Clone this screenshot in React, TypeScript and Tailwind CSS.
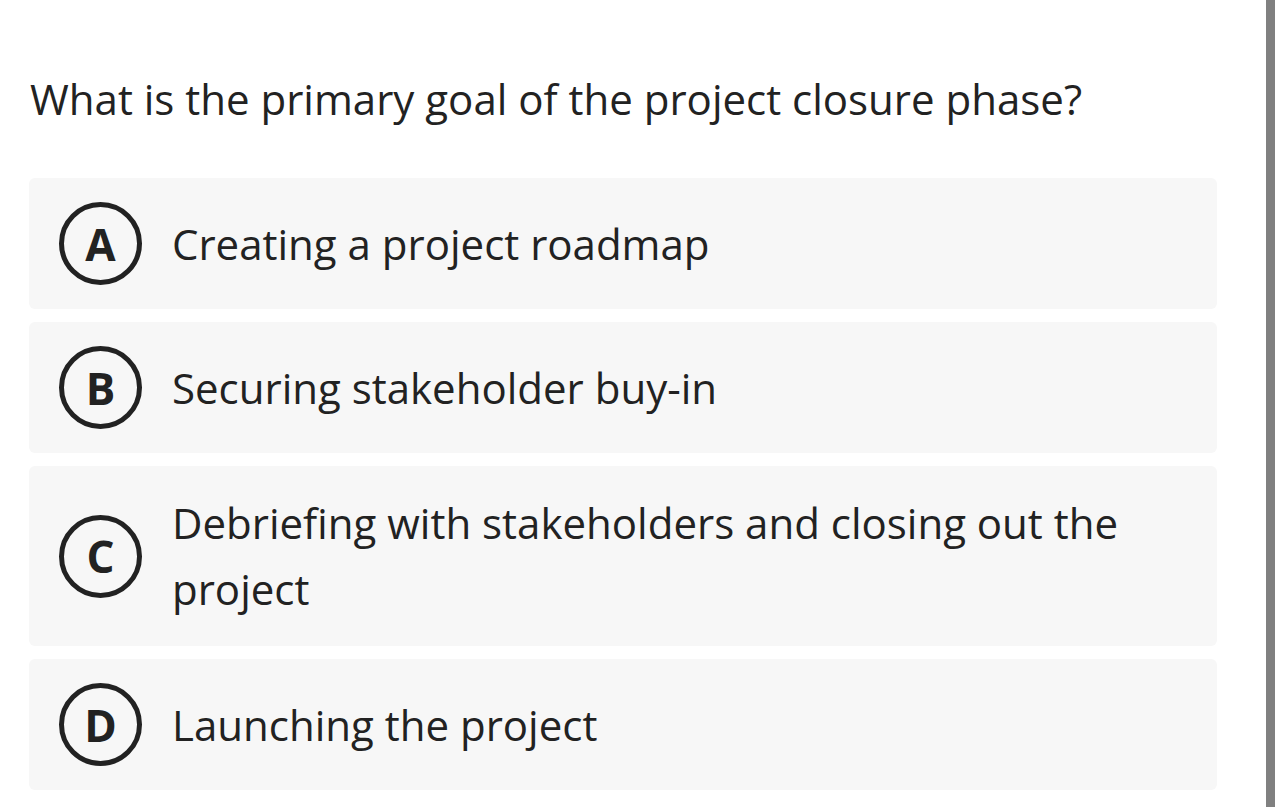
const options = [
  { letter: 'A', text: 'Creating a project roadmap' },
  { letter: 'B', text: 'Securing stakeholder buy-in' },
  { letter: 'C', text: 'Debriefing with stakeholders and closing out the project' },
  { letter: 'D', text: 'Launching the project' },
];

export default function App() {
  return (
    <div className="flex h-[807px] w-[1284px] bg-white font-['Open_Sans',sans-serif] text-[#222222]">
      <div className="flex-1 pl-[29px] pr-[49px]">
        <h1 className="mt-[66px] pl-[1px] text-[42px] leading-[66px] font-normal">
          What is the primary goal of the project closure phase?
        </h1>
        <div className="mt-[46px] flex flex-col gap-[13px]">
          {options.map((o) => (
            <div
              key={o.letter}
              className="flex items-center gap-[30px] rounded-[6px] bg-[#f7f7f7] py-[24px] pl-[30px] pr-[60px]"
            >
              <span className="flex h-[83px] w-[83px] shrink-0 items-center justify-center rounded-full border-[5px] border-[#222222] text-[44px] font-bold leading-none">
                {o.letter}
              </span>
              <span className="text-[42px] leading-[66px]">{o.text}</span>
            </div>
          ))}
        </div>
      </div>
      <div className="w-[9px] bg-[#808080]" />
      <div className="w-[9px]" />
    </div>
  );
}
